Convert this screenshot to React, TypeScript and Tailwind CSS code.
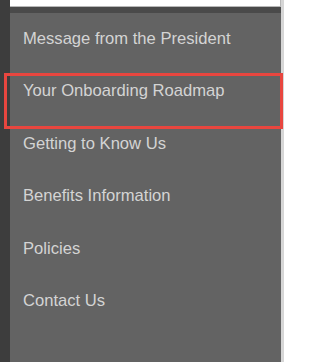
import React from "react";

const items = [
  "Message from the President",
  "Your Onboarding Roadmap",
  "Getting to Know Us",
  "Benefits Information",
  "Policies",
  "Contact Us",
];

export default function App() {
  return (
    <div className="relative flex h-[362px] w-[284px] overflow-hidden bg-[#3d3d3d]" style={{ fontFamily: '"Liberation Sans", Arial, sans-serif' }}>
      <div className="w-[10px] shrink-0" />
      <div className="flex flex-1 flex-col">
        <div className="h-[7px] shrink-0 border-b border-r border-[#b8b8b8] bg-white" />
        <div className="h-[6px] shrink-0 bg-[#4a4a4a]" />
        <div className="flex flex-1 flex-col bg-[#636363]">
          {items.map((t) => (
            <div key={t} className="flex h-[52.5px] items-center pl-[13px] text-[16.6px] text-[#d4d4d4]">
              {t}
            </div>
          ))}
        </div>
      </div>
      <div className="w-[3px] shrink-0 bg-[#d6d6d6]" />
      <div className="absolute left-[4px] top-[73px] h-[56px] w-[279px] border-[3px] border-[#e8463f]" />
    </div>
  );
}
